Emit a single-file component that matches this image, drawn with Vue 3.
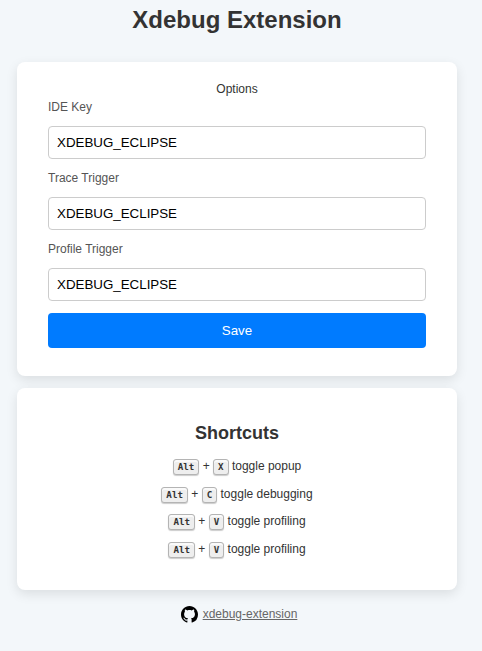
<script setup>
import { ref } from 'vue'

const fields = ref([
  { id: 'ide', label: 'IDE Key', value: 'XDEBUG_ECLIPSE' },
  { id: 'trace', label: 'Trace Trigger', value: 'XDEBUG_ECLIPSE' },
  { id: 'profile', label: 'Profile Trigger', value: 'XDEBUG_ECLIPSE' },
])

const shortcuts = [
  { key: 'X', action: 'toggle popup' },
  { key: 'C', action: 'toggle debugging' },
  { key: 'V', action: 'toggle profiling' },
  { key: 'V', action: 'toggle profiling' },
]
</script>

<template>
  <main class="page">
    <h1>Xdebug Extension</h1>
    <form class="card options" @submit.prevent>
      <div class="legend">Options</div>
      <div v-for="f in fields" :key="f.id" class="field">
        <label :for="f.id">{{ f.label }}</label>
        <input :id="f.id" v-model="f.value" type="text" />
      </div>
      <button type="submit">Save</button>
    </form>
    <section class="card shortcuts">
      <h2>Shortcuts</h2>
      <p v-for="(s, i) in shortcuts" :key="i"><kbd>Alt</kbd> + <kbd>{{ s.key }}</kbd> {{ s.action }}</p>
    </section>
    <footer>
      <svg viewBox="0 0 16 16" width="17" height="17" aria-hidden="true">
        <path d="M8 0C3.58 0 0 3.58 0 8c0 3.54 2.29 6.53 5.47 7.59.4.07.55-.17.55-.38 0-.19-.01-.82-.01-1.49-2.01.37-2.53-.49-2.69-.94-.09-.23-.48-.94-.82-1.13-.28-.15-.68-.52-.01-.53.63-.01 1.08.58 1.23.82.72 1.21 1.87.87 2.33.66.07-.52.28-.87.51-1.07-1.78-.2-3.64-.89-3.64-3.95 0-.87.31-1.59.82-2.15-.08-.2-.36-1.02.08-2.12 0 0 .67-.21 2.2.82.64-.18 1.32-.27 2-.27s1.36.09 2 .27c1.53-1.04 2.2-.82 2.2-.82.44 1.1.16 1.92.08 2.12.51.56.82 1.27.82 2.15 0 3.07-1.87 3.75-3.65 3.95.29.25.54.73.54 1.48 0 1.07-.01 1.93-.01 2.2 0 .21.15.46.55.38A8.01 8.01 0 0 0 16 8c0-4.42-3.58-8-8-8z" />
      </svg>
      <a href="#">xdebug-extension</a>
    </footer>
  </main>
</template>

<style>
body {
  background: #f3f7fa;
}
</style>

<style scoped>
.page {
  box-sizing: border-box;
  width: 474px;
  height: 651px;
  padding: 6px 17px 0;
  font-family: "Liberation Sans", Arial, sans-serif;
  font-size: 12px;
  color: #333;
}

h1 {
  margin: 0 0 28px;
  font-size: 24px;
  line-height: 28px;
  text-align: center;
}

.card {
  box-sizing: border-box;
  padding: 0 31px;
  background: #fff;
  border-radius: 8px;
  box-shadow: 0 4px 12px rgba(0, 0, 0, 0.1);
}

.options {
  height: 314px;
  padding-top: 19px;
  margin-bottom: 12px;
}

.legend {
  line-height: 16px;
  text-align: center;
}

.field {
  height: 71px;
}

label {
  display: block;
  padding-top: 3px;
  margin-bottom: 11px;
  line-height: 15px;
  color: #555;
}

input {
  display: block;
  box-sizing: border-box;
  width: 100%;
  height: 33px;
  padding: 0 8px 1px;
  margin: 0;
  border: 1px solid #ccc;
  border-radius: 4px;
  background: #fff;
  color: #000;
  font: 13.333px "Liberation Sans", Arial, sans-serif;
}

button {
  display: block;
  width: 100%;
  height: 35px;
  padding: 0;
  margin-top: 3px;
  border: 0;
  border-radius: 4px;
  background: #007bff;
  color: #fff;
  font: 13.333px "Liberation Sans", Arial, sans-serif;
}

.shortcuts {
  height: 202px;
  padding-top: 34px;
  margin-bottom: 15px;
  text-align: center;
}

h2 {
  margin: 0 0 13px;
  font-size: 18px;
  line-height: 22px;
}

p {
  height: 27.6px;
  margin: 0;
  line-height: 18px;
}

kbd {
  display: inline-block;
  padding: 2px 4px;
  border: 1px solid #b4b4b4;
  border-radius: 3px;
  background: #eee;
  box-shadow: 0 1px 1px rgba(0, 0, 0, 0.2), 0 2px 0 0 rgba(255, 255, 255, 0.7) inset;
  color: #333;
  font: 700 9.2px/10.2px "DejaVu Sans Mono", monospace;
  white-space: nowrap;
}

footer {
  display: flex;
  align-items: center;
  justify-content: center;
  gap: 5px;
  height: 18px;
  padding-left: 4px;
}

a {
  color: #666;
  line-height: 18px;
}
</style>
